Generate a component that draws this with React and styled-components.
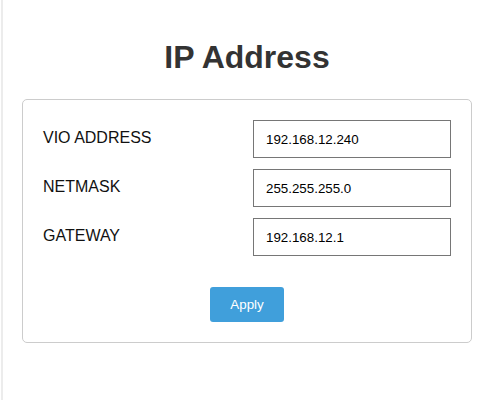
import { Fragment } from "react";
import styled, { createGlobalStyle } from "styled-components";

const GlobalStyle = createGlobalStyle`
  html, body {
    margin: 0;
    padding: 0;
    background: #ffffff;
    font-family: "Liberation Sans", Arial, sans-serif;
  }
`;

// 페이지 본문 (왼쪽 옅은 선)
const Page = styled.div`
  box-sizing: border-box;
  min-height: 100vh;
  margin-left: 1px;
  border-left: 2px solid #ececec;
  padding: 39px 18px 0 19px;
`;

const Title = styled.h1`
  margin: 0 0 23px;
  font-size: 32px;
  line-height: 37px;
  font-weight: 700;
  color: #333333;
  text-align: center;
`;

// 설정 카드
const Card = styled.form`
  box-sizing: border-box;
  width: 450px;
  border: 1px solid #cccccc;
  border-radius: 5px;
  padding: 20px 20px 20px;
  display: flex;
  flex-direction: column;
`;

const FieldList = styled.div`
  display: grid;
  grid-template-columns: 1fr 198px;
  row-gap: 11px;
  align-items: center;
`;

const Label = styled.label`
  font-size: 16px;
  color: #111111;
  padding-bottom: 3px;
`;

const Input = styled.input`
  box-sizing: border-box;
  width: 198px;
  height: 38px;
  margin: 0;
  border: 1px solid #767676;
  border-radius: 0;
  padding: 0 12px;
  font-family: "Liberation Sans", Arial, sans-serif;
  font-size: 13.33px;
  color: #000000;
  outline: none;
`;

const Actions = styled.div`
  display: flex;
  justify-content: center;
  margin-top: 31px;
`;

const ApplyButton = styled.button`
  height: 35px;
  padding: 0 20px;
  border: none;
  border-radius: 3px;
  background: #409fdb;
  color: #ffffff;
  font-family: "Liberation Sans", Arial, sans-serif;
  font-size: 13.33px;
  cursor: pointer;
`;

const fields = [
  { id: "vio", label: "VIO ADDRESS", value: "192.168.12.240" },
  { id: "netmask", label: "NETMASK", value: "255.255.255.0" },
  { id: "gateway", label: "GATEWAY", value: "192.168.12.1" },
];

const App = () => {
  return (
    <>
      <GlobalStyle />
      <Page>
        <Title>IP Address</Title>
        <Card onSubmit={(e) => e.preventDefault()}>
          <FieldList>
            {fields.map((f) => (
              <Fragment key={f.id}>
                <Label htmlFor={f.id}>{f.label}</Label>
                <Input id={f.id} defaultValue={f.value} />
              </Fragment>
            ))}
          </FieldList>
          <Actions>
            <ApplyButton type="submit">Apply</ApplyButton>
          </Actions>
        </Card>
      </Page>
    </>
  );
};

export default App;
